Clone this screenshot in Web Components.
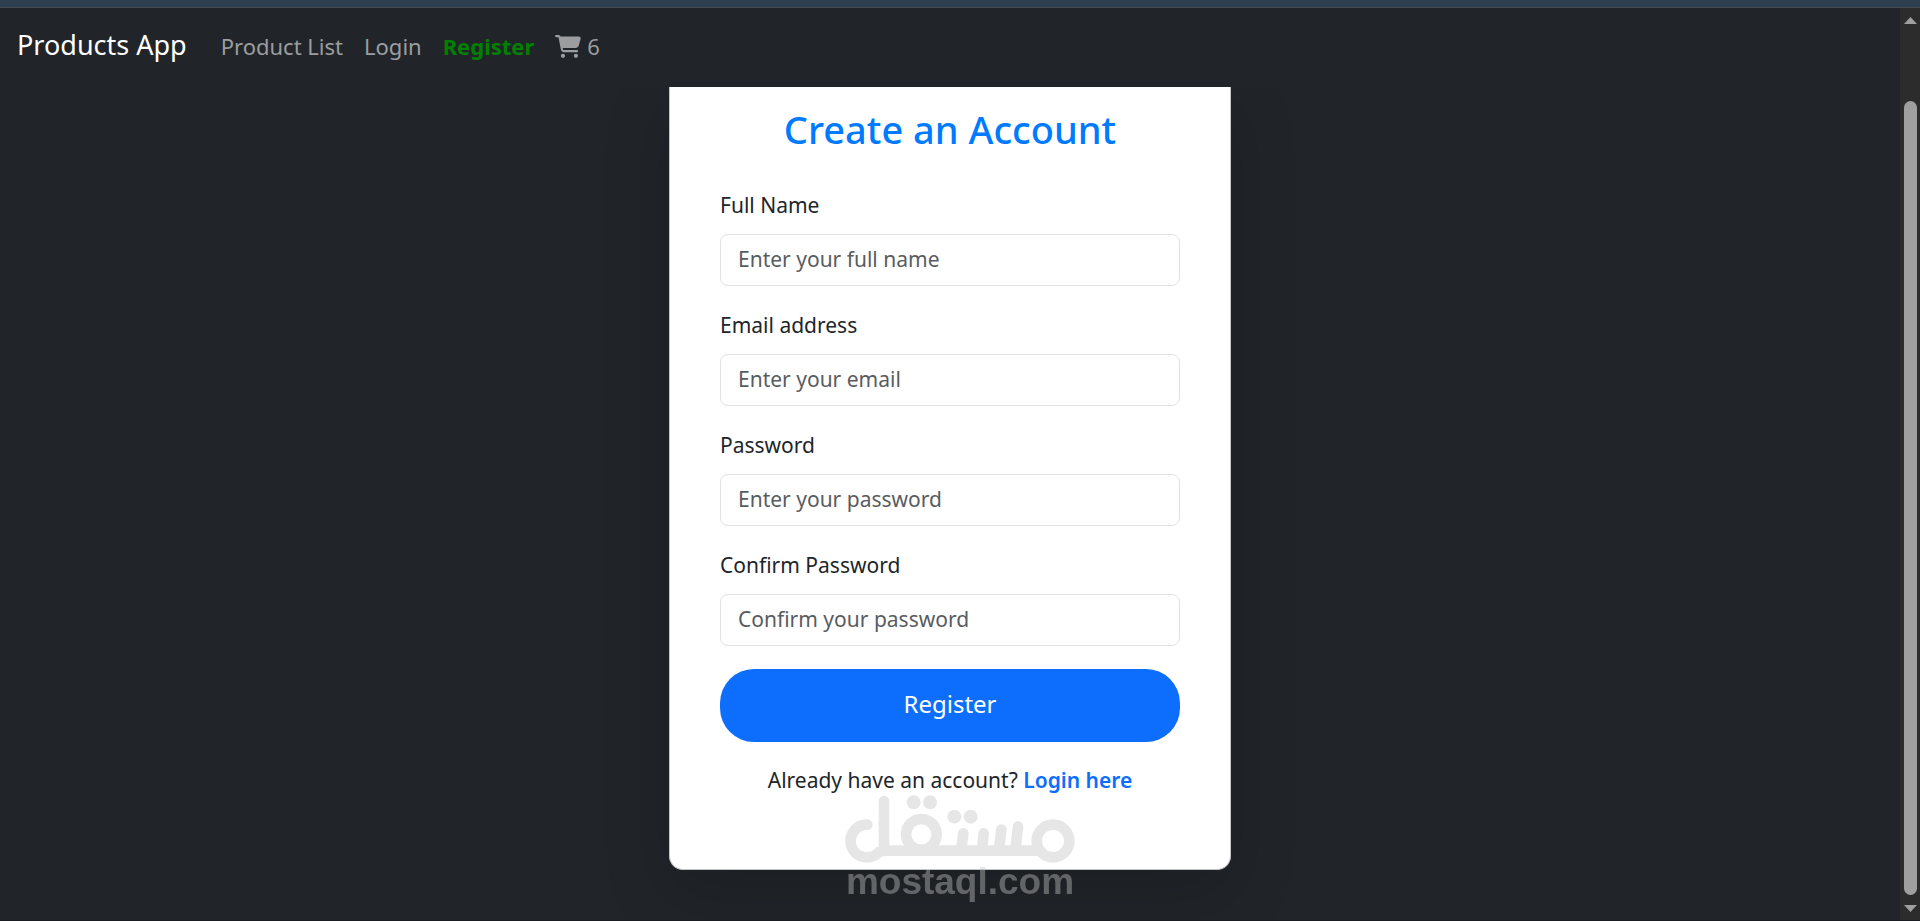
<!DOCTYPE html>
<html lang="en">
<head>
<meta charset="utf-8">
<title>Products App - Register</title>
<style>
  body { margin: 0; background: #212529; color: #212529; font: 21px/32px "Noto Sans", "Open Sans", sans-serif; }
</style>
</head>
<body>
<app-shell>
  <nav-bar slot="nav" brand="Products App">
    <nav-link href="#products">Product List</nav-link>
    <nav-link href="#login">Login</nav-link>
    <nav-link href="#register" active>Register</nav-link>
    <nav-link href="#cart" cart>6</nav-link>
  </nav-bar>
  <register-card heading="Create an Account">
    <form-field label="Full Name" type="text" placeholder="Enter your full name"></form-field>
    <form-field label="Email address" type="email" placeholder="Enter your email"></form-field>
    <form-field label="Password" type="password" placeholder="Enter your password"></form-field>
    <form-field label="Confirm Password" type="password" placeholder="Confirm your password"></form-field>
  </register-card>
  <scroll-rail slot="rail"></scroll-rail>
</app-shell>
<site-watermark>mostaql.com</site-watermark>

<script>
class BaseElement extends HTMLElement {
  connectedCallback() {
    if (!this.shadowRoot) this.attachShadow({ mode: 'open' }).innerHTML = this.render();
  }
  attr(name) { return this.getAttribute(name) || ''; }
}

customElements.define('app-shell', class extends BaseElement {
  render() {
    return `<style>
      :host { display: flex; flex-direction: column; box-sizing: border-box; height: 100vh; overflow: hidden; border-bottom: 1px solid #1a1d22; }
      .strip { flex: none; height: 7px; background: #2e3f4d; border-bottom: 1px solid #44494e; }
      .window { flex: 1; min-height: 0; display: grid; grid-template-columns: minmax(0, 1fr) 20px; }
      .page { display: flex; flex-direction: column; min-height: 0; }
      main { flex: 1; min-height: 0; overflow: hidden; padding: 0 16px; }
    </style>
    <div class="strip"></div>
    <div class="window">
      <div class="page"><slot name="nav"></slot><main><slot></slot></main></div>
      <slot name="rail"></slot>
    </div>`;
  }
});

customElements.define('nav-bar', class extends BaseElement {
  render() {
    return `<style>
      :host { display: block; background: #212529; }
      nav { display: flex; align-items: baseline; gap: 34px; padding: 17px 17px 22px; }
      .brand { color: #fff; font-size: 27px; line-height: 40px; text-decoration: none; white-space: nowrap; }
      .links { display: flex; align-items: baseline; gap: 21px; }
    </style>
    <nav><a class="brand" href="#home">${this.attr('brand')}</a><div class="links"><slot></slot></div></nav>`;
  }
});

customElements.define('nav-link', class extends BaseElement {
  render() {
    const cart = this.hasAttribute('cart') ? `<svg viewBox="0 0 576 512" aria-hidden="true"><path d="M0 24C0 10.7 10.7 0 24 0H69.5c22 0 41.5 12.8 50.6 32h411c26.3 0 45.5 25 38.6 50.4l-41 152.3c-8.5 31.4-37 53.3-69.5 53.3H170.7l5.4 28.5c2.2 11.3 12.1 19.5 23.6 19.5H488c13.3 0 24 10.7 24 24s-10.7 24-24 24H199.7c-34.6 0-64.3-24.6-70.7-58.5L77.4 54.5c-.7-3.8-4-6.5-7.9-6.5H24C10.7 48 0 37.3 0 24zM128 464a48 48 0 1 1 96 0 48 48 0 1 1 -96 0zm336-48a48 48 0 1 1 0 96 48 48 0 1 1 0-96z"/></svg>` : '';
    return `<style>
      :host { display: block; }
      a { color: #9b9d9f; font-size: 22px; line-height: 32px; text-decoration: none; white-space: nowrap; }
      :host([active]) a { color: #008000; font-weight: 700; }
      svg { width: 26px; height: 23px; margin-right: 6px; fill: currentColor; vertical-align: -3px; }
    </style><a href="${this.attr('href')}">${cart}<slot></slot></a>`;
  }
});

customElements.define('register-card', class extends BaseElement {
  render() {
    return `<style>
      :host { display: block; box-sizing: border-box; max-width: 562px; margin: 0 auto; padding: 19px 50px 73px;
        background: #fff; border: 1px solid #c3c4c6; border-top: 0; border-radius: 0 0 14px 14px;
        box-shadow: 0 22px 66px rgba(0, 0, 0, .175); }
      h1 { margin: 0 0 37px; color: #007bff; font-size: 38px; line-height: 46px; font-weight: 500; text-align: center; }
      form { display: flex; flex-direction: column; gap: 23px; }
      button { height: 73px; padding: 0 16px 4px; border: 0; border-radius: 34px; background: #0d6efd; color: #fff; font: inherit; font-size: 24px; cursor: pointer; }
      p { margin: 22px 0 0; text-align: center; }
      a { color: #0d6efd; font-weight: 600; text-decoration: none; }
    </style>
    <h1>${this.attr('heading')}</h1>
    <form><slot></slot><button type="button">Register</button></form>
    <p>Already have an account? <a href="#login">Login here</a></p>`;
  }
});

customElements.define('form-field', class extends BaseElement {
  render() {
    return `<style>
      :host { display: flex; flex-direction: column; gap: 13px; }
      input { box-sizing: border-box; width: 100%; height: 52px; padding: 0 17px 2px; border: 1px solid #dee2e6; border-radius: 8px;
        background: #fff; color: #212529; font: inherit; }
      input::placeholder { color: #595c5f; opacity: 1; }
    </style>
    <label for="field">${this.attr('label')}</label>
    <input id="field" type="${this.attr('type')}" placeholder="${this.attr('placeholder')}">`;
  }
});

customElements.define('scroll-rail', class extends BaseElement {
  render() {
    return `<style>
      :host { display: flex; flex-direction: column; align-items: center; box-sizing: border-box; padding: 9px 0 8px; background: #2c2c2c; }
      svg { flex: none; width: 13px; height: 7px; fill: #9f9f9f; }
      .track { flex: 1; box-sizing: border-box; width: 13px; padding: 77px 0 10px; }
      .thumb { height: 100%; border-radius: 7px; background: #9f9f9f; }
    </style>
    <svg viewBox="0 0 13 7"><path d="M6.500 0L13 7H0z"/></svg>
    <div class="track"><div class="thumb"></div></div>
    <svg viewBox="0 0 13 7"><path d="M0 0H13L6.500 7z"/></svg>`;
  }
});

customElements.define('site-watermark', class extends BaseElement {
  render() {
    return `<style>
      :host { position: fixed; left: 0; right: 0; bottom: 20px; display: flex; flex-direction: column; align-items: center;
        color: #c4c4c4; opacity: .42; pointer-events: none; font: 700 37px/38px "Liberation Sans", Arial, sans-serif; }
      svg { display: block; width: 230px; height: 68px; fill: none; stroke: currentColor; stroke-width: 32; stroke-linecap: round; }
      .dots { fill: currentColor; stroke: none; }
    </style>
    <svg viewBox="75 50 690 204" aria-hidden="true">
      <path d="M142 139A49 49 0 1 0 176 222Q184 217 196 217H660M192 68V215"/>
      <circle cx="304" cy="168" r="46"/>
      <circle cx="699" cy="188" r="49"/>
      <path d="M430 165L424 214M491 165L486 214M544 154L537 214M594 145L586 214"/>
      <g class="dots"><circle cx="281" cy="72" r="21"/><circle cx="330" cy="72" r="21"/><circle cx="403" cy="115" r="21"/><circle cx="452" cy="115" r="21"/></g>
    </svg>
    <span><slot></slot></span>`;
  }
});
</script>
</body>
</html>
